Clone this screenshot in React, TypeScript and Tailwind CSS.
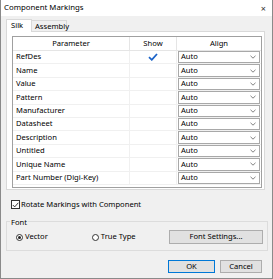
import React from 'react';

const rows = [
  { name: 'RefDes', show: true },
  { name: 'Name', show: false },
  { name: 'Value', show: false },
  { name: 'Pattern', show: false },
  { name: 'Manufacturer', show: false },
  { name: 'Datasheet', show: false },
  { name: 'Description', show: false },
  { name: 'Untitled', show: false },
  { name: 'Unique Name', show: false },
  { name: 'Part Number (Digi-Key)', show: false },
];

const Chevron = () => (
  <svg width="6" height="4" viewBox="0 0 6 4" className="text-[#606060]">
    <path d="M0.5 0.8 L3 3.2 L5.5 0.8" fill="none" stroke="currentColor" strokeWidth="0.8" />
  </svg>
);

const Combo = () => (
  <div className="mx-[1px] h-[12.4px] flex items-center justify-between border border-[#a8a8a8] bg-white pl-[2px] pr-[3px]">
    <span>Auto</span>
    <Chevron />
  </div>
);

const Radio = ({ checked, label }: { checked: boolean; label: string }) => (
  <div className="flex items-center gap-[2px]">
    <span className="w-[7px] h-[7px] rounded-full border border-[#333] bg-white flex items-center justify-center">
      {checked && <span className="w-[3px] h-[3px] rounded-full bg-[#222]" />}
    </span>
    <span>{label}</span>
  </div>
);

export default function App() {
  return (
    <div
      className="w-[273px] h-[279px] bg-[#f0f0f0] border-x border-b border-[#8a8a8a] text-[7.6px] text-black leading-none flex flex-col"
      style={{ fontFamily: '"Noto Sans", "Open Sans", sans-serif' }}
    >
      {/* title bar */}
      <div className="h-[16px] bg-white flex items-center justify-between pl-[3px] pr-[6px] text-[7.8px]">
        <span>Component Markings</span>
        <span className="text-[9px] text-[#333]">×</span>
      </div>

      {/* tabs */}
      <div className="flex items-end h-[15px] pl-[5px] pt-[2px]">
        <div className="h-[13px] w-[26px] bg-white border-t border-x border-[#d9d9d9] pl-[4px] pt-[2px] relative z-10 -mb-[1px]">
          Silk
        </div>
        <div className="h-[11px] w-[35px] bg-[#f0f0f0] border-t border-r border-[#d9d9d9] pl-[3px] pt-[2px]">
          Assembly
        </div>
      </div>

      {/* tab panel */}
      <div className="ml-[5px] w-[259px] h-[159px] bg-white border border-[#d9d9d9] pl-[5px] pt-[4px]">
        <div className="w-[250px] h-[152px] border border-[#a0a0a0] flex flex-col">
          <div className="flex h-[14px] border-b border-[#e5e5e5] text-center">
            <div className="w-[117px] border-r border-[#e5e5e5] flex items-center justify-center">Parameter</div>
            <div className="w-[47px] border-r border-[#e5e5e5] flex items-center justify-center">Show</div>
            <div className="flex-1 flex items-center justify-center">Align</div>
          </div>
          {rows.map((r) => (
            <div key={r.name} className="flex h-[13.4px] border-b border-[#f0f0f0] items-center">
              <div className="w-[117px] h-full border-r border-[#f0f0f0] pl-[3px] flex items-center">{r.name}</div>
              <div className="w-[47px] h-full border-r border-[#f0f0f0] flex items-center justify-center">
                {r.show && (
                  <svg width="10" height="8" viewBox="0 0 10 8">
                    <path d="M1 4.2 L3.8 6.8 L9 1" fill="none" stroke="#1b63c8" strokeWidth="1.8" />
                  </svg>
                )}
              </div>
              <div className="flex-1">
                <Combo />
              </div>
            </div>
          ))}
        </div>
      </div>

      {/* rotate checkbox */}
      <div className="flex items-center gap-[1px] ml-[10px] mt-[10px] h-[9px]">
        <span className="w-[9px] h-[9px] border border-[#333] bg-white flex items-center justify-center">
          <svg width="7" height="6" viewBox="0 0 7 6">
            <path d="M0.8 3 L2.7 4.9 L6.3 0.8" fill="none" stroke="#222" strokeWidth="0.9" />
          </svg>
        </span>
        <span>Rotate Markings with Component</span>
      </div>

      {/* font group */}
      <div className="relative ml-[5px] mt-[12px] w-[262px] h-[30px] border border-[#dcdcdc] flex items-center justify-between pl-[9px] pr-[4px] pt-[2px]">
        <span className="absolute left-[3px] -top-[3px] bg-[#f0f0f0] px-[1px]">Font</span>
        <div className="flex items-center gap-[44px]">
          <Radio checked label="Vector" />
          <Radio checked={false} label="True Type" />
        </div>
        <button className="w-[94px] h-[14px] bg-[#e1e1e1] border border-[#adadad] flex items-center justify-center">
          Font Settings...
        </button>
      </div>

      {/* buttons */}
      <div className="flex justify-end gap-[5px] mt-[9px] pr-[10px]">
        <button className="w-[47px] h-[13px] bg-[#e1e1e1] border border-[#0078d7] flex items-center justify-center">OK</button>
        <button className="w-[42px] h-[13px] bg-[#e1e1e1] border border-[#adadad] flex items-center justify-center">Cancel</button>
      </div>
    </div>
  );
}
